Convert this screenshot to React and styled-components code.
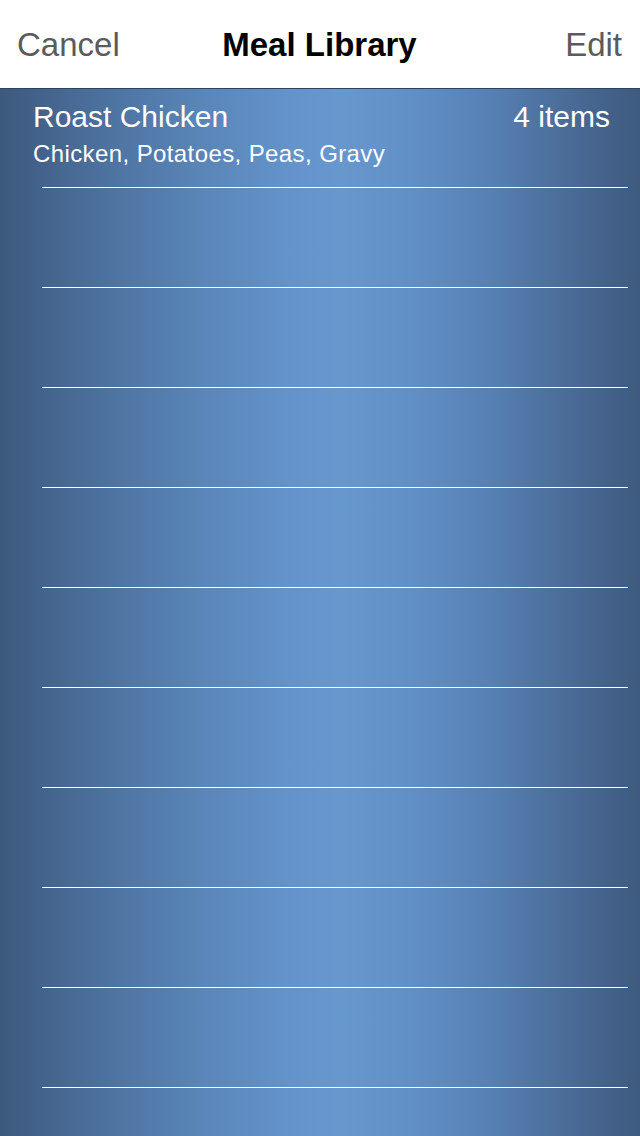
import React from "react";
import styled, { createGlobalStyle } from "styled-components";

const GlobalStyle = createGlobalStyle`
  html, body {
    margin: 0;
    padding: 0;
    font-family: "Liberation Sans", Arial, sans-serif;
  }
  * { box-sizing: border-box; }
`;

const meals = [
  { name: "Roast Chicken", count: "4 items", contents: "Chicken, Potatoes, Peas, Gravy" },
];

const emptyRows = 9;

const Screen = styled.div`
  display: flex;
  flex-direction: column;
  width: 640px;
  min-height: 100vh;
`;

const NavBar = styled.div`
  display: grid;
  grid-template-columns: 1fr auto 1fr;
  align-items: start;
  height: 89px;
  padding: 25px 18px 0 17px;
  background: #ffffff;
  border-bottom: 1px solid #2c4262;
`;

const NavButton = styled.div`
  font-size: 33px;
  line-height: 40px;
  color: #5b5b5b;
  justify-self: ${(p) => (p.$right ? "end" : "start")};
`;

const NavTitle = styled.div`
  font-size: 33px;
  line-height: 40px;
  font-weight: 700;
  color: #000;
`;

const List = styled.div`
  flex: 1;
  display: flex;
  flex-direction: column;
  background: linear-gradient(
    to right,
    #3d597d 0%,
    #43628a 6%,
    #4e74a2 18%,
    #5a86b9 32%,
    #6393ca 45%,
    #6697cd 53%,
    #6190c6 64%,
    #5781b5 76%,
    #4b6d99 88%,
    #3e5a7e 100%
  );
`;

const Row = styled.div`
  position: relative;
  height: ${(p) => (p.$first ? "99px" : "100px")};
  padding: 10px 30px 0 33px;
  color: #fff;
  &::after {
    content: "";
    position: absolute;
    left: 42px;
    right: 12px;
    bottom: 0;
    height: 1px;
    background: #ffffff;
  }
`;

const RowTop = styled.div`
  display: flex;
  justify-content: space-between;
  font-size: 30px;
  line-height: 36px;
`;

const RowSub = styled.div`
  margin-top: 4px;
  font-size: 24px;
  line-height: 30px;
  letter-spacing: 0.4px;
`;

export default function App() {
  return (
    <Screen>
      <GlobalStyle />
      <NavBar>
        <NavButton>Cancel</NavButton>
        <NavTitle>Meal Library</NavTitle>
        <NavButton $right>Edit</NavButton>
      </NavBar>
      <List>
        {meals.map((m) => (
          <Row key={m.name} $first>
            <RowTop>
              <span>{m.name}</span>
              <span>{m.count}</span>
            </RowTop>
            <RowSub>{m.contents}</RowSub>
          </Row>
        ))}
        {Array.from({ length: emptyRows }).map((_, i) => (
          <Row key={i} />
        ))}
      </List>
    </Screen>
  );
}
